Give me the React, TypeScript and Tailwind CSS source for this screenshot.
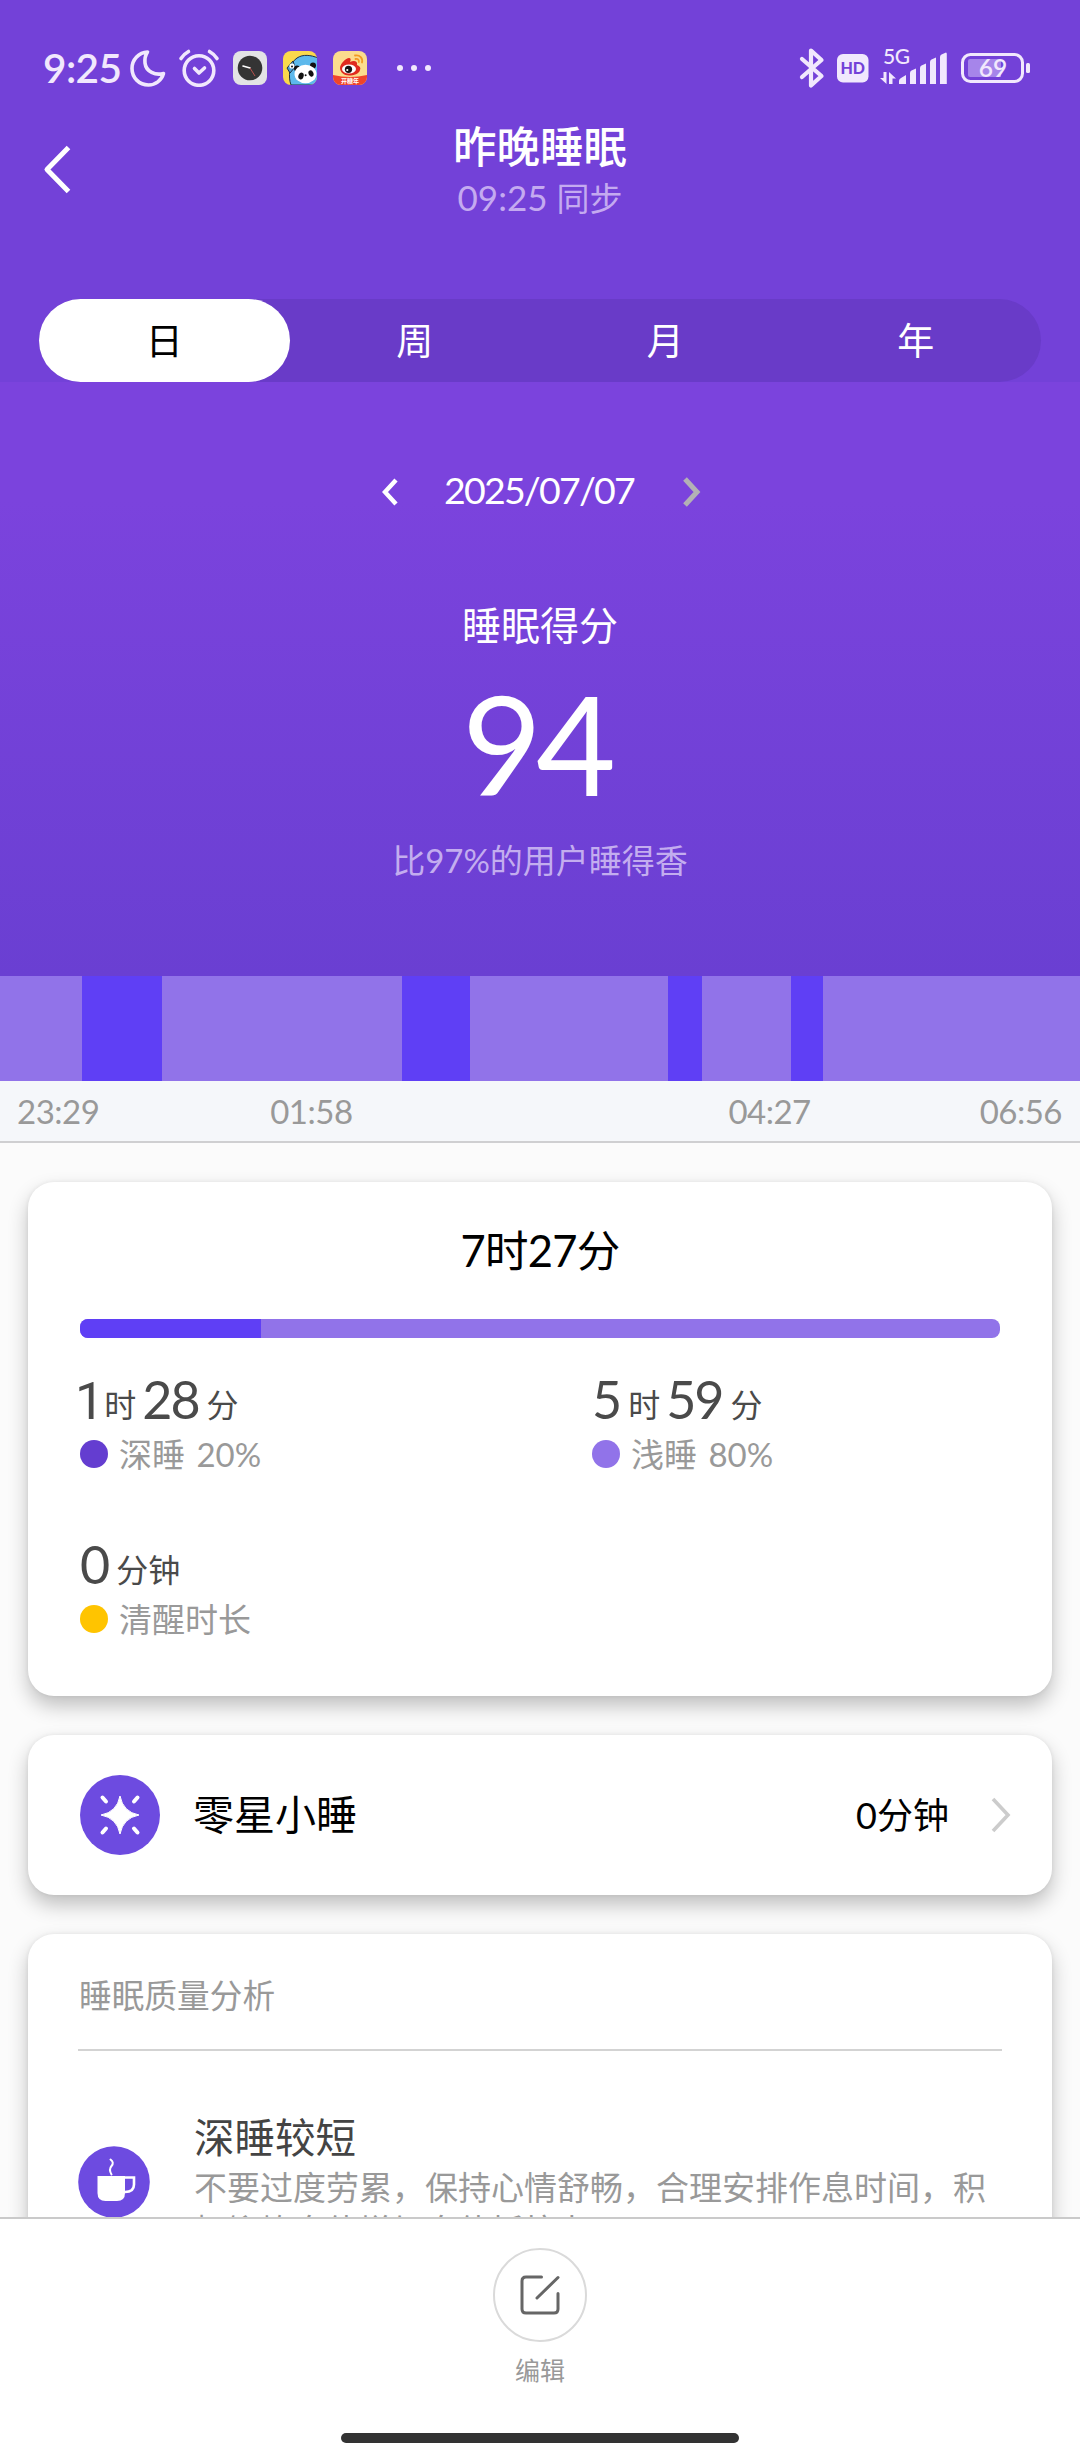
import type { ReactNode } from 'react'

type Stage = {
  kind: 'light' | 'deep'
  width: number
}

type Stat = {
  parts: { value: string; unit: string }[]
  label: string
  dot: string
}

const tabs = ['日', '周', '月', '年']

const stages: Stage[] = [
  { kind: 'light', width: 82 },
  { kind: 'deep', width: 80 },
  { kind: 'light', width: 240 },
  { kind: 'deep', width: 68 },
  { kind: 'light', width: 198 },
  { kind: 'deep', width: 34 },
  { kind: 'light', width: 89 },
  { kind: 'deep', width: 32 },
  { kind: 'light', width: 257 },
]

const stats: Stat[] = [
  {
    parts: [
      { value: '1', unit: '时' },
      { value: '28', unit: '分' },
    ],
    label: '深睡 20%',
    dot: 'bg-[#643dd0]',
  },
  {
    parts: [
      { value: '5', unit: '时' },
      { value: '59', unit: '分' },
    ],
    label: '浅睡 80%',
    dot: 'bg-[#9173e9]',
  },
  { parts: [{ value: '0', unit: '分钟' }], label: '清醒时长', dot: 'bg-[#ffc400]' },
]

function ClockAppIcon() {
  return (
    <svg width="34" height="34" viewBox="0 0 34 34">
      <rect width="34" height="34" rx="8" fill="#e3e3e5" />
      <circle cx="17" cy="17" r="12.3" fill="#343434" />
      <path d="M10 15l7 2" stroke="#fff" strokeWidth="1.6" strokeLinecap="round" />
      <path d="M17 17l5 8" stroke="#b8504c" strokeWidth="1" />
    </svg>
  )
}

function PandaAppIcon() {
  return (
    <svg width="34" height="34" viewBox="0 0 34 34">
      <clipPath id="panda">
        <rect width="34" height="34" rx="8" />
      </clipPath>
      <g clipPath="url(#panda)">
        <rect width="34" height="34" fill="#fbd94c" />
        <path d="M8 34C5 26 6 12 14 7c6-4 14-3 21 0v27z" fill="#5db9ec" stroke="#22303f" strokeWidth="1" />
        <path d="M4 17l6-7 2 6-5 6z" fill="#4a9fd6" stroke="#22303f" strokeWidth="1" />
        <circle cx="9" cy="15" r="2.6" fill="#fff" />
        <circle cx="9" cy="15.6" r="1" fill="#111" />
        <circle cx="14" cy="17.5" r="3" fill="#111" />
        <circle cx="30" cy="14.5" r="3" fill="#111" />
        <ellipse cx="22.5" cy="23" rx="11" ry="9.3" fill="#fff" />
        <ellipse cx="18" cy="25" rx="2.6" ry="3.4" fill="#111" transform="rotate(20 18 25)" />
        <ellipse cx="28" cy="22.5" rx="2.4" ry="3.2" fill="#111" transform="rotate(-25 28 22.5)" />
        <circle cx="22.6" cy="24.2" r="1" fill="#111" />
      </g>
    </svg>
  )
}

function WeiboAppIcon() {
  return (
    <svg width="34" height="34" viewBox="0 0 34 34">
      <clipPath id="weibo">
        <rect width="34" height="34" rx="8" />
      </clipPath>
      <g clipPath="url(#weibo)">
        <rect width="34" height="34" fill="#fbdc8e" />
        <path d="M0 24q17 4 34 0v10H0z" fill="#f0442b" />
        <path d="M7 17c0-4 6-10 9-10 2 0 2 2 1 4 4-2 8-1 7 3 3 1 4 3 3 5-1 4-6 5.5-11 5.5S7 21 7 17z" fill="#e02a1e" />
        <ellipse cx="16" cy="18" rx="7" ry="4.6" fill="#fff" />
        <circle cx="15.5" cy="18.3" r="3.6" fill="#151515" />
        <circle cx="14.3" cy="19" r="1.1" fill="#fff" />
        <path d="M22 4.5c5-1 8 3 7 7M22.5 8c2.5-.5 3.8 1 3.3 3" fill="none" stroke="#f29a23" strokeWidth="1.8" strokeLinecap="round" />
        <text x="17" y="32" textAnchor="middle" fontSize="6" fontWeight="700" fill="#fff">
          开糖年
        </text>
      </g>
    </svg>
  )
}

function StatusBar() {
  return (
    <div className="flex h-[100px] items-start justify-between pt-[46px] pr-[50px] pl-[43px] text-[#f1e8fd]">
      <div className="flex h-11 items-center">
        <span className="w-[87px] text-[40.5px] leading-[44px] font-semibold tracking-[-0.6px] whitespace-nowrap">9:25</span>
        <svg width="36" height="38" viewBox="0 0 36 38" fill="none" stroke="currentColor" strokeWidth="3.6" strokeLinejoin="round">
          <path d="M17.5 3C9 3.5 2 10.5 2 19.5S9 36 18.5 36c7 0 13-4.5 15-11.5-8 2-17.5-1.5-18.5-10.5-.4-4 .5-8 2.5-11z" />
        </svg>
        <svg className="ml-[12px]" width="42" height="38" viewBox="0 0 42 38" fill="none" stroke="currentColor" strokeWidth="3.6" strokeLinecap="round" strokeLinejoin="round">
          <circle cx="21" cy="21.5" r="14.8" />
          <path d="M3 9.5Q6 5 10.5 2.5M39 9.5Q36 5 31.5 2.5M16.5 19.5l4.5 4.5 5.5-5" />
        </svg>
        <div className="ml-[13px] flex gap-4">
          <ClockAppIcon />
          <PandaAppIcon />
          <WeiboAppIcon />
        </div>
        <div className="ml-[30px] flex gap-2">
          <span className="size-1.5 rounded-full bg-current" />
          <span className="size-1.5 rounded-full bg-current" />
          <span className="size-1.5 rounded-full bg-current" />
        </div>
      </div>
      <svg className="-mt-2" width="231" height="52" viewBox="799 38 231 52" fill="currentColor">
        <path d="M802 59l19.5 17L811 85.5v-35L821.5 60 802 77" fill="none" stroke="currentColor" strokeWidth="4.2" strokeLinecap="round" strokeLinejoin="round" />
        <rect x="837" y="54" width="31.5" height="28.5" rx="6" />
        <text x="852.7" y="74" textAnchor="middle" fontSize="16" fontWeight="900" fill="#7341d8">
          HD
        </text>
        <text x="883" y="63.5" fontSize="21" fontWeight="500" letterSpacing="-.5">
          5G
        </text>
        <path d="M886.5 72h-3v6h-3.5l6.5 6zM889 84V72l7 6.5h-3.5V84z" />
        <path d="M899 84v-3q0-2 2-3l5-3v9zM910 84V73q0-2 1.5-2.5l4.5-2V84zM920 84V68q0-2 1.5-2.5l4.5-2V84zM930 84V62q0-2 1.5-2.5l4.5-2V84zM940 84V57q0-2 1.5-2.5l4.5-2q.8 0 .8 1.5v30z" />
        <rect x="962.5" y="54.5" width="60" height="27" rx="8" fill="none" stroke="currentColor" strokeWidth="3" />
        <path d="M970 59h31v18h-31q-2 0-2-2V61q0-2 2-2z" fill="#a685ea" />
        <rect x="1026" y="63" width="4" height="10" rx="1.5" />
        <text x="993" y="77" textAnchor="middle" fontSize="24.5" fontWeight="600">
          69
        </text>
      </svg>
    </div>
  )
}

function Header() {
  return (
    <header className="flex h-[382px] shrink-0 flex-col bg-[#7341d8]">
      <StatusBar />
      <div className="flex h-[199px] items-start justify-between px-[42px]">
        <svg className="mt-11" width="30" height="52" viewBox="0 0 30 52" fill="none" stroke="#fff" strokeWidth="5">
          <path d="M26.5 3.5L5 25.5l21.5 22" strokeLinejoin="round" />
        </svg>
        <div className="pt-[20px] text-center">
          <h1 className="text-[43.5px] leading-[52px] font-medium text-white">昨晚睡眠</h1>
          <p className="text-[35px] leading-[50px] text-[#c4aaf0]">
            09:25 <span className="text-[33px]">同步</span>
          </p>
        </div>
        <div className="w-[30px]" />
      </div>
      <div className="mx-[39px] flex h-[83px] rounded-full bg-[#693bc8]">
        {tabs.map((tab, i) => (
          <button
            key={tab}
            type="button"
            className={`flex-1 rounded-full text-[37px] leading-[82px] ${i === 0 ? 'bg-white text-black' : 'text-white'}`}
          >
            {tab}
          </button>
        ))}
      </div>
    </header>
  )
}

function Score() {
  return (
    <section className="flex h-[594px] shrink-0 flex-col items-center bg-linear-to-b from-[#7b43dd] from-20% to-[#6a3fd2] text-white">
      <div className="mt-[83px] flex h-[54px] items-center">
        <svg width="20" height="30" viewBox="0 0 20 30" fill="none" stroke="#fff" strokeWidth="4.4">
          <path d="M17 3L6 15l11 12" />
        </svg>
        <span className="-mt-[5px] mr-[46px] ml-[44px] w-[192px] text-center text-[37.5px] leading-[54px] tracking-[-1.8px] whitespace-nowrap">
          2025/07/07
        </span>
        <svg width="20" height="32" viewBox="0 0 20 32" fill="none" stroke="#b3b1b5" strokeWidth="5">
          <path d="M4 3l12 13L4 29" />
        </svg>
      </div>
      <h2 className="mt-[78px] text-[39px] leading-[56px]">睡眠得分</h2>
      <div className="mt-[20px] mr-[8px] text-[138px] leading-[140px] tracking-[-6px]">94</div>
      <p className="mt-[22px] text-[33px] leading-[50px] text-[#c3adef]">比97%的用户睡得香</p>
    </section>
  )
}

function Timeline() {
  return (
    <section className="shrink-0">
      <div className="flex h-[105px]">
        {stages.map((s, i) => (
          <div key={i} className={s.kind === 'deep' ? 'bg-[#5f3ff5]' : 'bg-[#9173e9]'} style={{ width: s.width }} />
        ))}
      </div>
      <div className="flex h-[62px] justify-between border-b-2 border-[#cfcfd1] bg-[#f5f7fa] pr-[18px] pl-[17px] text-[33px] leading-[60px] tracking-[-0.5px] text-[#999]">
        <span>23:29</span>
        <span className="-ml-[3px]">01:58</span>
        <span className="ml-[202px]">04:27</span>
        <span className="-ml-[5px]">06:56</span>
      </div>
    </section>
  )
}

function Card({ className, children }: { className: string; children: ReactNode }) {
  return (
    <div
      className={`mx-7 shrink-0 rounded-[26px] bg-white shadow-[0_10px_20px_rgba(0,0,0,0.24),0_0_4px_rgba(0,0,0,0.07)] ${className}`}
    >
      {children}
    </div>
  )
}

function StatItem({ stat }: { stat: Stat }) {
  return (
    <div>
      <div className="flex h-[56px] items-baseline leading-[56px] text-[#4a4a4a]">
        {stat.parts.map((p) => (
          <span key={p.unit} className="mr-[6px] flex items-baseline">
            <span
              className={`text-[52px] tracking-[-2px] ${p.value === '1' ? "-mr-[6px] -ml-[5px] font-[family-name:Roboto]" : ''}`}
            >
              {p.value}
            </span>
            <span className="relative -top-[2px] ml-[8px] text-[32px]">{p.unit}</span>
          </span>
        ))}
      </div>
      <div className="flex h-[54px] items-center">
        <span className={`size-7 rounded-full ${stat.dot}`} />
        <span className="ml-[11px] text-[33px] leading-[54px] text-[#999] [word-spacing:3px]">{stat.label}</span>
      </div>
    </div>
  )
}

export default function App() {
  return (
    <div className="flex h-[2460px] w-[1080px] flex-col overflow-hidden bg-[#fbfbfb] font-[Lato,'Noto_Sans_CJK_SC',sans-serif]">
      <main className="flex h-[2217px] flex-col overflow-hidden">
        <Header />
        <Score />
        <Timeline />

        <Card className="mt-[39px] h-[514px] px-[52px]">
          <h3 className="pt-[38px] text-center text-[43.5px] leading-[60px] tracking-[-0.7px] text-black">7时27分</h3>
          <div className="mt-[39px] flex h-[19px] overflow-hidden rounded-[8px] bg-[#9173e9]">
            <div className="w-[181px] bg-[#5f3ff5]" />
          </div>
          <div className="mt-[33px] grid grid-cols-[512px_1fr] gap-y-[55px]">
            {stats.map((s) => (
              <StatItem key={s.label} stat={s} />
            ))}
          </div>
        </Card>

        <Card className="mt-[39px] flex h-[160px] items-center pr-[39px] pl-[52px]">
          <svg width="80" height="80" viewBox="0 0 80 80">
            <circle cx="40" cy="40" r="40" fill="#6d4be0" />
            <path d="M40 21Q43 37 59 40 43 43 40 59 37 43 21 40 37 37 40 21z" fill="#fff" stroke="#fff" strokeLinejoin="round" />
            <path d="M22.5 22.5l3.5 4M57.5 22.5l-3.5 4M22.5 57.5l3.5-4M57.5 57.5l-3.5-4" stroke="#fff" strokeWidth="4" strokeLinecap="round" />
          </svg>
          <span className="ml-[33px] text-[41px] leading-[60px] text-black">零星小睡</span>
          <span className="ml-auto text-[36px] leading-[60px] text-black">0分钟</span>
          <svg className="ml-[42px]" width="22" height="36" viewBox="0 0 22 36" fill="none" stroke="#ccc" strokeWidth="3.6">
            <path d="M2 2l15 16L2 34" />
          </svg>
        </Card>

        <Card className="mt-[39px] h-[460px] px-[50px]">
          <h3 className="h-[117px] border-b-2 border-[#d3d3d3] pt-[36px] pl-[1px] text-[32.7px] leading-[52px] text-[#999]">
            睡眠质量分析
          </h3>
          <div className="flex pt-[59px]">
            <svg className="mt-[36px] shrink-0" width="72" height="72" viewBox="0 0 72 72">
              <circle cx="36" cy="36" r="35.8" fill="#6d4be0" />
              <path d="M19.5 30H47v17q0 8-8 8H27.5q-8 0-8-8z" fill="#fff" />
              <path d="M46 31.5h10v7q0 7.5-9 7.5" fill="none" stroke="#fff" strokeWidth="2.6" />
              <path d="M32.5 13.5q4 3 1 6.5t0 8.5" fill="none" stroke="#fff" strokeWidth="2" strokeLinecap="round" />
            </svg>
            <div className="-mr-[30px] ml-[44px]">
              <h4 className="text-[40.5px] leading-[56px] text-[#444]">深睡较短</h4>
              <p className="w-[800px] text-[33px] leading-[43px] text-[#999]">
                不要过度劳累，保持心情舒畅，合理安排作息时间，积极锻炼身体增加身体抵抗力。
              </p>
            </div>
          </div>
        </Card>
      </main>

      <footer className="flex h-[243px] flex-col items-center border-t-2 border-[#cacaca] bg-white">
        <button type="button" className="mt-[29px] flex size-[94px] items-center justify-center rounded-full border-2 border-[#dadada]">
          <svg width="40" height="40" viewBox="0 0 40 40" fill="none" stroke="#666" strokeWidth="3" strokeLinecap="round" strokeLinejoin="round">
            <path d="M21.5 2H6Q2 2 2 6v28q0 4 4 4h28q4 0 4-4V18.5M38 2.5L17 23" />
          </svg>
        </button>
        <span className="mt-[10px] text-[25px] leading-[36px] text-[#999]">编辑</span>
        <div className="mt-[45px] h-[10px] w-[398px] rounded-full bg-[#333]" />
      </footer>
    </div>
  )
}
